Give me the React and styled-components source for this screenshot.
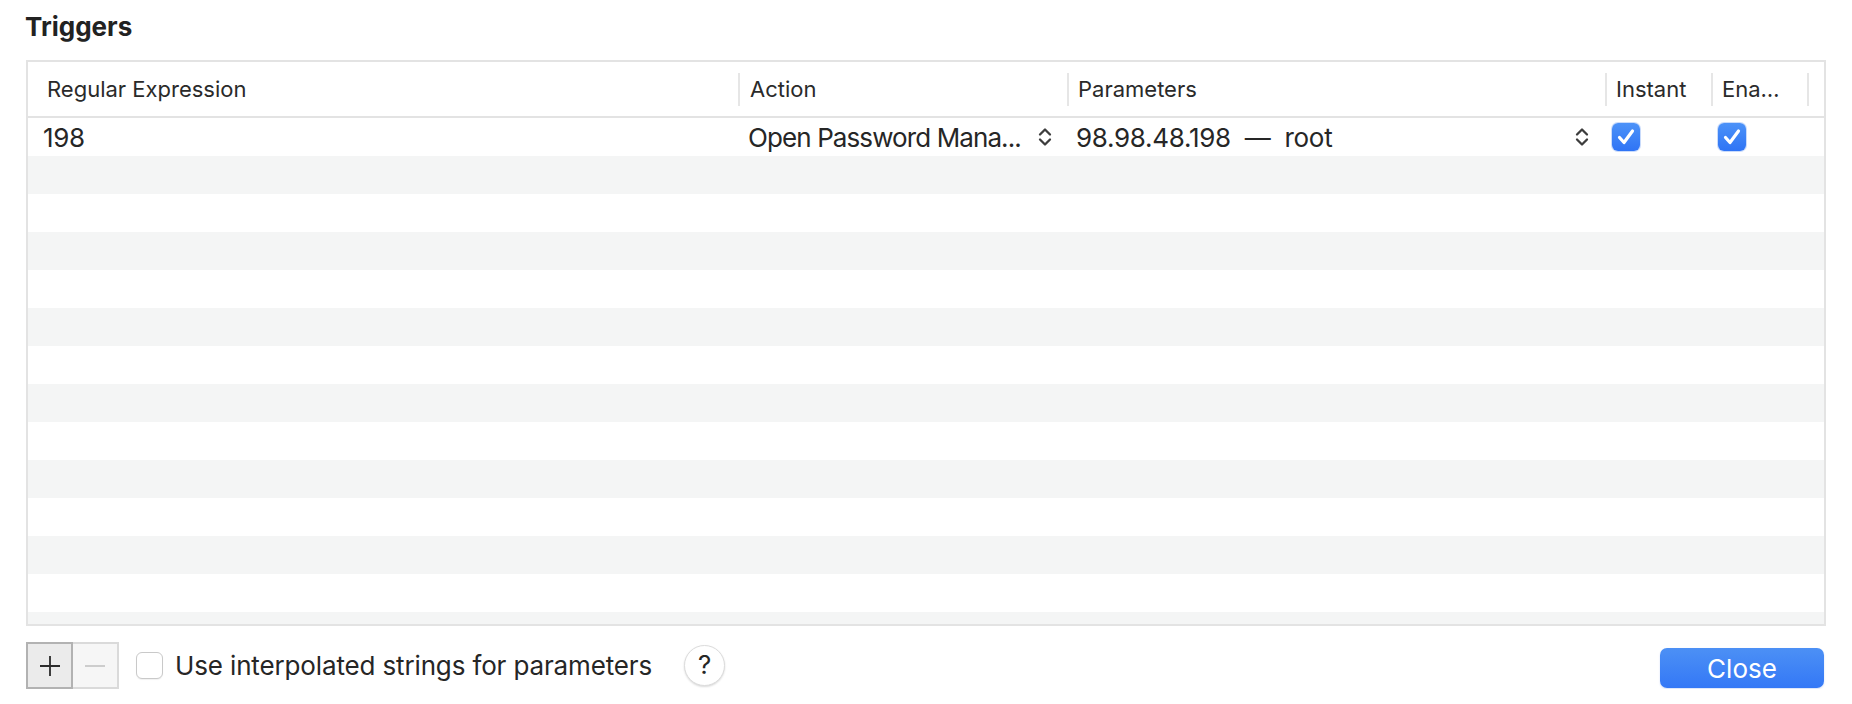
import styled, { createGlobalStyle } from "styled-components";

// column widths include the trailing divider of each header cell
const COLUMNS = "712px 329px 538px 106px 96px 1fr";
const ROW_COUNT = 14;

const GlobalStyle = createGlobalStyle`
  * { box-sizing: border-box; }
  body {
    margin: 0;
    background: #fff;
    color: #262626;
    font-family: Inter, "Noto Sans", sans-serif;
  }
`;

const Page = styled.div`
  padding: 0 26px;
`;

const Title = styled.h1`
  margin: 11px 0 17px -1px;
  font-size: 26px;
  line-height: 32px;
  font-weight: 700;
  color: #222;
`;

const Table = styled.div`
  border: 2px solid #e3e3e3;
  background: #fff;
`;

const HeaderRow = styled.div`
  display: grid;
  grid-template-columns: ${COLUMNS};
  height: 56px;
  border-bottom: 2px solid #e3e3e3;
`;

const HeadCell = styled.div`
  display: flex;
  align-items: center;
  min-width: 0;
  padding-left: ${(p) => p.$inset}px;
  font-size: 22px;
  color: #2a2a2a;
`;

const HeadLabel = styled.span`
  flex: 1;
  white-space: nowrap;
  overflow: hidden;
`;

const HeadDivider = styled.span`
  flex-shrink: 0;
  width: 2px;
  height: 33px;
  background: #e6e6e6;
`;

const Body = styled.div`
  height: 506px;
  overflow: hidden;
`;

const Row = styled.div`
  display: grid;
  grid-template-columns: ${COLUMNS};
  height: 38px;
  background: ${(p) => (p.$striped ? "#f4f5f5" : "#fff")};
`;

const Cell = styled.div`
  display: flex;
  align-items: center;
  min-width: 0;
  padding-left: ${(p) => p.$inset || 0}px;
  padding-right: ${(p) => p.$trail || 0}px;
  font-size: 26px;
  letter-spacing: -0.3px;
  white-space: pre;
`;

const CellText = styled.span`
  flex: 1;
  letter-spacing: ${(p) => (p.$tight ? "-0.9px" : "inherit")};
`;

const CheckBox = styled.span`
  display: inline-flex;
  align-items: center;
  justify-content: center;
  width: ${(p) => p.$size}px;
  height: ${(p) => p.$size}px;
  border-radius: 6px;
  flex-shrink: 0;
  ${(p) =>
    p.$checked
      ? `background: linear-gradient(#4c92f8, #2f74f5);
         box-shadow: 0 0 0 1px rgba(40, 110, 240, 0.25);`
      : `background: #fff;
         border: 1.5px solid #c9c9c9;
         box-shadow: 0 1px 1px rgba(0, 0, 0, 0.06);`}
`;

const Footer = styled.div`
  display: flex;
  align-items: center;
  margin-top: 16px;
`;

const Segmented = styled.div`
  display: flex;
`;

const SegButton = styled.button`
  display: flex;
  align-items: center;
  justify-content: center;
  width: ${(p) => (p.$active ? 47 : 46)}px;
  height: 47px;
  padding: 0;
  background: ${(p) => (p.$active ? "#ebebeb" : "#f6f6f6")};
  border: 2px solid ${(p) => (p.$active ? "#b2b2b2" : "#dadada")};
  ${(p) => !p.$active && "border-left: none;"}
`;

const OptionLabel = styled.span`
  margin-left: 12px;
  font-size: 26px;
  letter-spacing: -0.14px;
  color: #262626;
`;

const HelpButton = styled.button`
  display: flex;
  align-items: center;
  justify-content: center;
  width: 41px;
  height: 41px;
  margin-left: 32px;
  padding: 0 0 2px;
  border-radius: 50%;
  border: 1px solid #dcdcdc;
  background: #fff;
  box-shadow: 0 1px 2px rgba(0, 0, 0, 0.15);
  font-family: Inter, sans-serif;
  font-size: 26px;
  color: #262626;
`;

const CloseButton = styled.button`
  width: 164px;
  height: 40px;
  margin: 5px 2px 0 auto;
  border: none;
  border-radius: 7px;
  background: linear-gradient(#4c90f5, #3478f6);
  box-shadow: 0 1px 2px rgba(30, 90, 220, 0.2);
  color: #fff;
  font-family: Inter, sans-serif;
  font-size: 26px;
`;

const Chevrons = () => (
  <svg width="16" height="20" viewBox="0 0 16 20" fill="none">
    <path
      d="M3 7.5 L8 2.5 L13 7.5 M3 12.5 L8 17.5 L13 12.5"
      stroke="#3d3d3d"
      strokeWidth="2.3"
      strokeLinecap="round"
      strokeLinejoin="round"
    />
  </svg>
);

const Check = () => (
  <svg width="28" height="28" viewBox="0 0 28 28" fill="none">
    <path
      d="M7.5 14.5 L12 19.5 L20.5 8"
      stroke="#fff"
      strokeWidth="3.2"
      strokeLinecap="round"
      strokeLinejoin="round"
    />
  </svg>
);

const headers = [
  { label: "Regular Expression", inset: 19 },
  { label: "Action", inset: 10 },
  { label: "Parameters", inset: 9 },
  { label: "Instant", inset: 9 },
  { label: "Ena…", inset: 9 },
];

const App = () => {
  const rows = Array.from({ length: ROW_COUNT }, (_, i) => i);

  return (
    <Page>
      <GlobalStyle />
      <Title>Triggers</Title>
      <Table>
        <HeaderRow>
          {headers.map(({ label, inset }) => (
            <HeadCell key={label} $inset={inset}>
              <HeadLabel>{label}</HeadLabel>
              <HeadDivider />
            </HeadCell>
          ))}
          <HeadCell />
        </HeaderRow>
        <Body>
          {rows.map((i) =>
            i === 0 ? (
              <Row key={i}>
                <Cell $inset={15}>
                  <CellText>198</CellText>
                </Cell>
                <Cell $inset={8} $trail={16}>
                  <CellText $tight>Open Password Mana...</CellText>
                  <Chevrons />
                </Cell>
                <Cell $inset={7} $trail={17}>
                  <CellText>98.98.48.198  —  root</CellText>
                  <Chevrons />
                </Cell>
                <Cell $inset={5}>
                  <CheckBox $size={28} $checked>
                    <Check />
                  </CheckBox>
                </Cell>
                <Cell $inset={5}>
                  <CheckBox $size={28} $checked>
                    <Check />
                  </CheckBox>
                </Cell>
                <Cell />
              </Row>
            ) : (
              <Row key={i} $striped={i % 2 === 1} />
            )
          )}
        </Body>
      </Table>
      <Footer>
        <Segmented>
          <SegButton $active>
            <svg width="22" height="22" viewBox="0 0 22 22">
              <path d="M11 1 V21 M1 11 H21" stroke="#2b2b2b" strokeWidth="1.8" />
            </svg>
          </SegButton>
          <SegButton>
            <svg width="22" height="22" viewBox="0 0 22 22">
              <path d="M1 11 H21" stroke="#c9c9c9" strokeWidth="1.8" />
            </svg>
          </SegButton>
        </Segmented>
        <CheckBox $size={27} style={{ marginLeft: 17 }} />
        <OptionLabel>Use interpolated strings for parameters</OptionLabel>
        <HelpButton>?</HelpButton>
        <CloseButton>Close</CloseButton>
      </Footer>
    </Page>
  );
};

export default App;
